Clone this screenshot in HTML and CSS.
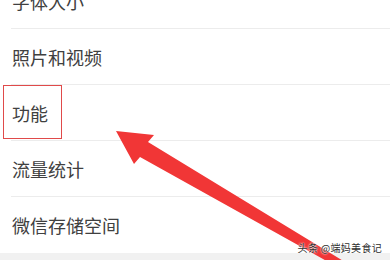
FILE: index.html
```html
<!DOCTYPE html>
<html lang="zh">
<head>
<meta charset="utf-8">
<link rel="stylesheet" href="styles.css">
</head>
<body>
<div class="screen">
  <ul class="menu">
    <li class="row">字体大小</li>
    <li class="row">照片和视频</li>
    <li class="row">功能</li>
    <li class="row">流量统计</li>
    <li class="row last">微信存储空间</li>
  </ul>
  <div class="band"></div>
  <div class="highlight"></div>
  <svg class="arrow" width="390" height="260" viewBox="0 0 390 260">
    <polygon points="116,131 154,135 148,142 345,262 332,264 140,157 134,164" fill="#f13636"/>
  </svg>
  <div class="watermark">头条 @端妈美食记</div>
</div>
</body>
</html>
```
FILE: styles.css
```css
html, body {
  margin: 0;
  padding: 0;
  background: #fff;
}
.screen {
  position: relative;
  width: 390px;
  height: 260px;
  overflow: hidden;
  background: #fff;
  font-family: "Noto Sans CJK SC", "Noto Sans", sans-serif;
}
.menu {
  list-style: none;
  margin: -27px 0 0 0;
  padding: 0 0 0 11px;
}
.row {
  box-sizing: border-box;
  height: 56px;
  display: flex;
  align-items: center;
  padding-left: 1px;
  border-bottom: 1px solid #ececec;
  font-size: 18px;
  color: #404040;
}
.row.last {
  border-bottom: none;
}
.band {
  height: 10px;
  background: #f1f1f1;
}
.highlight {
  position: absolute;
  left: 3px;
  top: 85px;
  width: 57px;
  height: 52px;
  border: 1.5px solid #e04a4a;
}
.arrow {
  position: absolute;
  left: 0;
  top: 0;
}
.watermark {
  position: absolute;
  right: 8px;
  top: 241px;
  font-size: 10px;
  line-height: 14px;
  letter-spacing: 0.3px;
  color: #2e2e2e;
  text-shadow: 0 0 2px #fff, 0 0 2px #fff;
}
```
